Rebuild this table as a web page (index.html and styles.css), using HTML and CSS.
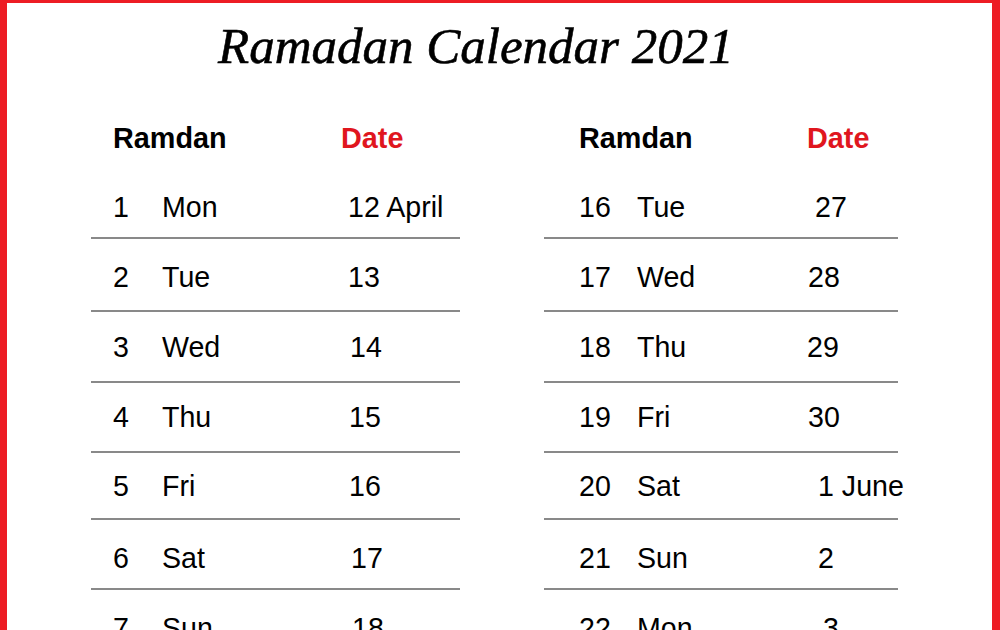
FILE: index.html
```html
<!DOCTYPE html>
<html lang="en">
<head>
<meta charset="utf-8">
<title>Ramadan Calendar 2021</title>
<link rel="stylesheet" href="styles.css">
</head>
<body>
<div class="page">
  <h1 class="title">Ramadan Calendar 2021</h1>
  <div class="tables">
    <section class="col col-left">
      <div class="head"><span>Ramdan</span><span class="head-date">Date</span></div>
      <div class="row"><span>1</span><span>Mon</span><span>12 April</span></div>
      <div class="row"><span>2</span><span>Tue</span><span>13</span></div>
      <div class="row"><span>3</span><span>Wed</span><span class="o2">14</span></div>
      <div class="row"><span>4</span><span>Thu</span><span class="o1">15</span></div>
      <div class="row"><span>5</span><span>Fri</span><span class="o1">16</span></div>
      <div class="row"><span>6</span><span>Sat</span><span class="o3">17</span></div>
      <div class="row"><span>7</span><span>Sun</span><span class="o4">18</span></div>
    </section>
    <section class="col col-right">
      <div class="head"><span>Ramdan</span><span class="head-date">Date</span></div>
      <div class="row"><span>16</span><span>Tue</span><span class="o7">27</span></div>
      <div class="row"><span>17</span><span>Wed</span><span>28</span></div>
      <div class="row"><span>18</span><span>Thu</span><span class="m1">29</span></div>
      <div class="row"><span>19</span><span>Fri</span><span>30</span></div>
      <div class="row"><span>20</span><span>Sat</span><span class="o10">1 June</span></div>
      <div class="row"><span>21</span><span>Sun</span><span class="o10">2</span></div>
      <div class="row"><span>22</span><span>Mon</span><span class="o15">3</span></div>
    </section>
  </div>
</div>
</body>
</html>
```

FILE: styles.css
```css
html, body {
  margin: 0;
  padding: 0;
  overflow: hidden;
  background: #ffffff;
}

.page {
  box-sizing: border-box;
  width: 1000px;
  height: 630px;
  overflow: hidden;
  border-left: 7px solid #ed1c24;
  border-right: 8px solid #ed1c24;
  border-top: 3px solid #ed1c24;
  padding-top: 15px;
  background: #ffffff;
  font-family: "Liberation Sans", Arial, sans-serif;
  color: #000;
}

.title {
  margin: 0 0 0 211px;
  font-family: "Liberation Serif", "Times New Roman", serif;
  font-style: italic;
  font-weight: normal;
  font-size: 51px;
  line-height: 56px;
  color: #000;
  white-space: nowrap;
  -webkit-text-stroke: 0.6px #000;
}

.tables {
  display: flex;
  gap: 84px;
  padding-left: 84px;
  margin-top: 48px;
}

.col-left { width: 369px; }
.col-right { width: 354px; }

.head {
  display: grid;
  grid-template-columns: 228px 1fr;
  font-weight: bold;
  font-size: 28.8px;
  line-height: 32px;
  margin-bottom: 15px;
}
.col-left .head { padding-left: 22px; }
.col-right .head { padding-left: 35px; }

.head-date { color: #e0161e; }

.row {
  box-sizing: border-box;
  display: grid;
  font-size: 28.6px;
  line-height: 32px;
  height: 70px;
  padding-top: 22px;
  border-bottom: 2px solid #898989;
  white-space: nowrap;
}
.col-left .row {
  grid-template-columns: 49px 186px 1fr;
  padding-left: 22px;
}
.col-right .row {
  grid-template-columns: 58px 171px 1fr;
  padding-left: 35px;
}

.row:nth-of-type(2) { height: 70px; }
.row:nth-of-type(3) { height: 73px; }
.row:nth-of-type(4) { height: 71px; padding-top: 19px; }
.row:nth-of-type(5) { height: 70px; padding-top: 18px; }
.row:nth-of-type(6) { height: 67px; padding-top: 17px; }
.row:nth-of-type(7) { height: 70px; }

.o1 { padding-left: 1px; }
.o2 { padding-left: 2px; }
.o3 { padding-left: 3px; }
.o4 { padding-left: 4px; }
.o7 { padding-left: 7px; }
.o10 { padding-left: 10px; }
.o15 { padding-left: 15px; }
.m1 { margin-left: -1px; }
```
